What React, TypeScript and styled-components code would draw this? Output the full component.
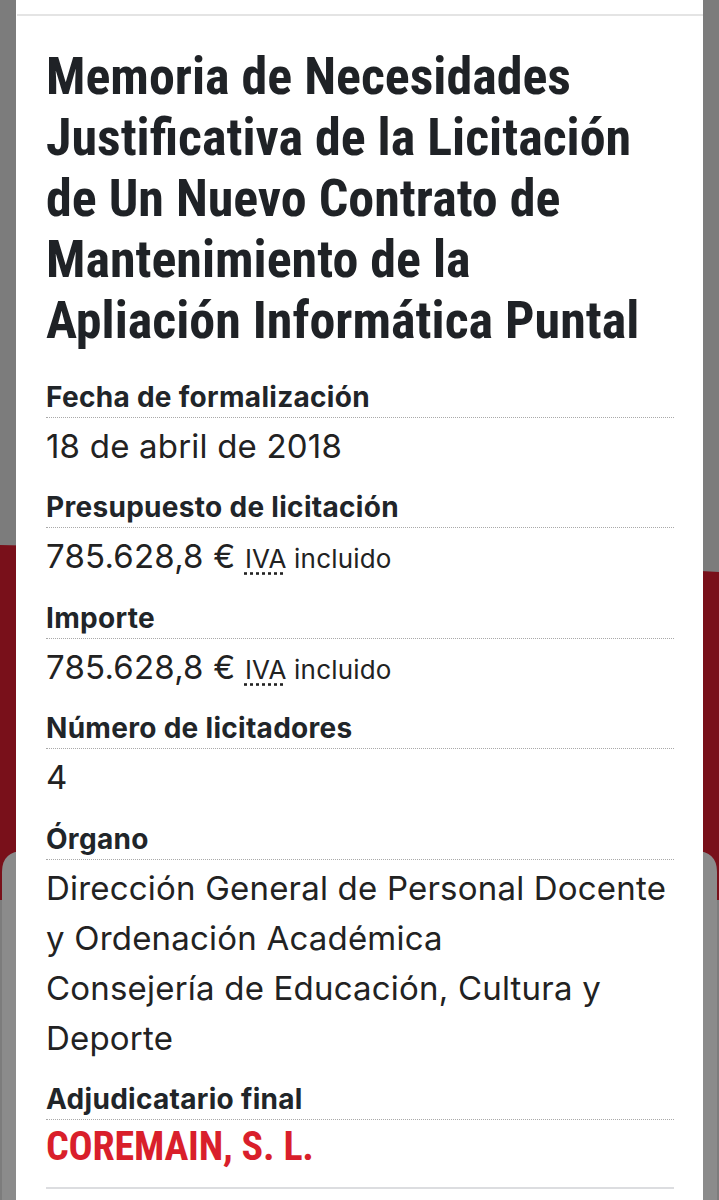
import styled, { createGlobalStyle } from 'styled-components'

// estilos globales
const GlobalStyle = createGlobalStyle`
  html, body {
    margin: 0;
    padding: 0;
    background: #7c7c7c;
  }
  * {
    box-sizing: border-box;
  }
`

const rows = [
  { label: 'Fecha de formalización', value: ['18 de abril de 2018'] },
  { label: 'Presupuesto de licitación', value: ['785.628,8 €'], iva: true },
  { label: 'Importe', value: ['785.628,8 €'], iva: true },
  { label: 'Número de licitadores', value: ['4'] },
  {
    label: 'Órgano',
    value: [
      'Dirección General de Personal Docente y Ordenación Académica',
      'Consejería de Educación, Cultura y Deporte',
    ],
  },
]

// fondo detrás de la tarjeta
const Backdrop = () => (
  <BackdropLayer>
    <svg width="719" height="1200" viewBox="0 0 719 1200">
      <rect x="0" y="0" width="719" height="1200" fill="#7c7c7c" />
      <path d="M0 545 Q360 552 719 572 L719 900 L0 900 Z" fill="#79101a" />
      <path
        d="M2 872 Q2 851 24 851 L695 851 Q717 851 717 872 L717 1200 L2 1200 Z"
        fill="#8b8b8b"
      />
    </svg>
  </BackdropLayer>
)

const App = () => {
  return (
    <>
      <GlobalStyle />
      <Backdrop />
      <Card>
        <Body>
          <Title>
            Memoria de Necesidades Justificativa de la Licitación de Un Nuevo
            Contrato de Mantenimiento de la Apliación Informática Puntal
          </Title>
          <Details>
            {rows.map((row) => (
              <Field key={row.label}>
                <Label>{row.label}</Label>
                <Value>
                  {row.value.map((line) => (
                    <ValueLine key={line}>
                      {line}
                      {row.iva && (
                        <>
                          {' '}
                          <Small>
                            <Abbr title="Impuesto sobre el valor añadido">IVA</Abbr> incluido
                          </Small>
                        </>
                      )}
                    </ValueLine>
                  ))}
                </Value>
              </Field>
            ))}
            <Field>
              <Label>Adjudicatario final</Label>
              <Winner>COREMAIN, S. L.</Winner>
            </Field>
          </Details>
          <EndRule />
        </Body>
      </Card>
    </>
  )
}

// estilos
const BackdropLayer = styled.div`
  position: fixed;
  inset: 0;
  z-index: 0;
  svg {
    display: block;
  }
`

const Card = styled.main`
  position: relative;
  z-index: 1;
  margin: 0 16px;
  min-height: 1200px;
  background: #fff;
  padding-top: 14px;
`

const Body = styled.section`
  border-top: 2px solid #e4e4e4;
  margin-left: 1px;
  padding: 30px 29px 0 29px;
`

const Title = styled.h1`
  margin: 0 0 28px;
  font-family: Roboto, 'Open Sans', sans-serif;
  font-stretch: 75%;
  font-weight: 700;
  font-size: 52px;
  line-height: 61px;
  color: #1f2226;
`

const Details = styled.dl`
  margin: 0;
  display: flex;
  flex-direction: column;
  gap: 18.4px;
`

const Field = styled.div`
  display: flex;
  flex-direction: column;
`

const Label = styled.dt`
  font-family: Inter, 'Liberation Sans', sans-serif;
  font-weight: 700;
  font-size: 28px;
  letter-spacing: 0.3px;
  line-height: 36px;
  color: #212529;
  padding-bottom: 2px;
  border-bottom: 1px dotted #a9a9a9;
`

const Value = styled.dd`
  margin: 0;
  padding-top: 3px;
  font-family: Inter, 'Liberation Sans', sans-serif;
  font-weight: 400;
  font-size: 33px;
  letter-spacing: 0.2px;
  line-height: 50px;
  color: #222;
`

const ValueLine = styled.div``

const Small = styled.span`
  font-size: 26px;
  line-height: 1;
`

const Abbr = styled.abbr`
  text-decoration: underline dotted;
  text-underline-offset: 4px;
  cursor: help;
`

const Winner = styled.dd`
  margin: 0;
  padding-top: 2px;
  font-family: Roboto, 'Open Sans', sans-serif;
  font-stretch: 75%;
  font-weight: 700;
  font-size: 40px;
  letter-spacing: -0.2px;
  line-height: 50px;
  color: #d91f2b;
`

const EndRule = styled.hr`
  margin: 15px 0 0;
  border: 0;
  border-top: 2px solid #dcdde0;
`

export default App
